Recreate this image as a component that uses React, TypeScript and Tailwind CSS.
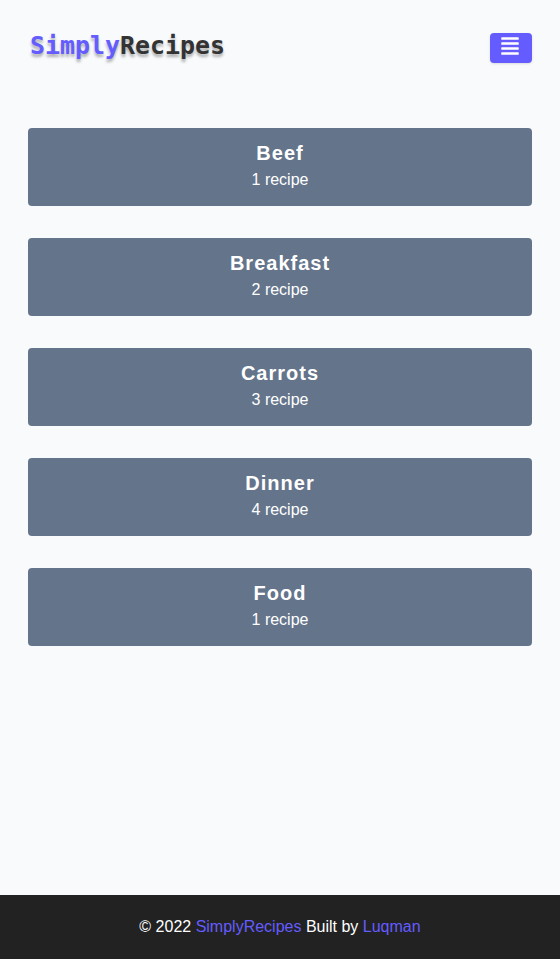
import { FaAlignJustify } from "react-icons/fa";

const recipes: [string, number][] = [
  ["Beef", 1],
  ["Breakfast", 2],
  ["Carrots", 3],
  ["Dinner", 4],
  ["Food", 1],
];

export default function App() {
  return (
    <div className="flex min-h-screen flex-col bg-[#f8fafc] font-['Liberation_Sans',Arial,sans-serif] text-base leading-6">
      <header className="flex h-24 items-center justify-between px-7">
        <a className="ml-[2px] mb-[5px] scale-y-[0.96] font-['DejaVu_Sans_Mono',monospace] text-[25px] leading-8 font-bold tracking-[-0.05px] text-[#333] [text-shadow:0px_3px_3px_rgba(0,0,0,0.3)]">
          <span className="text-[#645cff]">Simply</span>Recipes
        </a>
        <button className="flex h-[30px] w-[42px] items-start justify-center rounded bg-[#645cff] pt-[3px] pr-[2px] text-white shadow">
          <FaAlignJustify size={20} />
        </button>
      </header>
      <main className="flex flex-1 flex-col gap-8 px-7 pt-8">
        {recipes.map(([name, count]) => (
          <a key={name} className="flex h-[78px] flex-col items-center rounded bg-[#64748b] pt-3 text-white">
            <h5 className="text-[20px] leading-[26px] font-bold tracking-[1px]">{name}</h5>
            <p className="pt-0.5">{count} recipe</p>
          </a>
        ))}
      </main>
      <footer className="flex h-16 items-center justify-center bg-[#222] text-white">
        <p>
          © 2022 <span className="text-[#645cff]">SimplyRecipes</span> Built by <span className="text-[#645cff]">Luqman</span>
        </p>
      </footer>
    </div>
  );
}
